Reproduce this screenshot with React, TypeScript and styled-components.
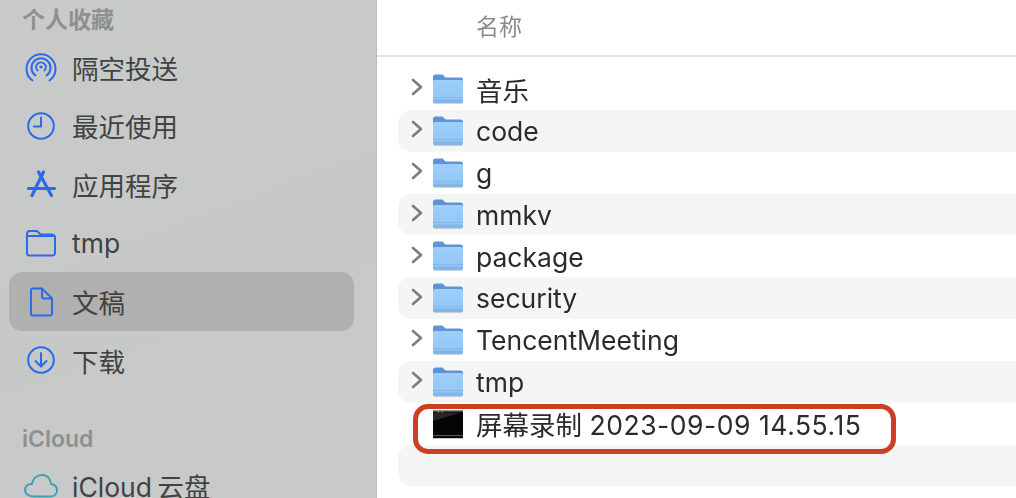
import React from "react";
import styled, { createGlobalStyle } from "styled-components";

const GlobalStyle = createGlobalStyle`
  html, body {
    margin: 0;
    padding: 0;
    height: 100%;
    overflow: hidden;
    background: #fff;
  }
  #root {
    height: 100%;
  }
`;

const FONT = `Inter, "Noto Sans CJK SC", sans-serif`;

const Window = styled.div`
  display: flex;
  width: 1016px;
  height: 498px;
  overflow: hidden;
  font-family: ${FONT};
  filter: blur(0.6px);
`;

const Sidebar = styled.aside`
  flex: none;
  box-sizing: border-box;
  width: 377px;
  height: 498px;
  overflow: hidden;
  padding: 0 22px 0 9px;
  background: linear-gradient(160deg, #c9caca, #c7c9c9 55%, #c9c9c9);
  border-right: 1px solid #bdbdbd;
`;

const SectionTitle = styled.div<{ $top: number }>`
  height: 38px;
  margin-top: ${(p) => p.$top}px;
  padding-left: 13px;
  font-size: 23px;
  font-weight: 600;
  line-height: 40px;
  color: #8e9090;
`;

const SideItem = styled.div<{ $active?: boolean }>`
  display: flex;
  align-items: center;
  gap: 14px;
  height: 58.6px;
  padding-left: 15px;
  border-radius: 13px;
  font-size: 26.5px;
  color: #414343;
  background: ${(p) => (p.$active ? "#afb0af" : "transparent")};

  svg {
    flex: none;
    width: 34px;
    height: 34px;
  }
`;

const NarrowSpace = styled.span`
  word-spacing: -2px;
`;

const Main = styled.main`
  flex: 1;
  min-width: 0;
`;

const Header = styled.div`
  box-sizing: border-box;
  height: 57px;
  padding: 9px 0 0 99px;
  border-bottom: 2px solid #e3e3e3;
  font-size: 23px;
  line-height: 36px;
  color: #8b8b8b;
`;

const List = styled.div`
  position: relative;
  padding: 11px 0 0 21px;
`;

const Row = styled.div<{ $striped: boolean }>`
  display: flex;
  align-items: center;
  height: 41.85px;
  padding-left: 13px;
  border-radius: 13px 0 0 13px;
  background: ${(p) => (p.$striped ? "#f4f5f5" : "transparent")};
  font-size: 26.5px;
  color: #2b2b2b;
  white-space: nowrap;
`;

const RowName = styled.span`
  margin-top: 0.5px;
`;

const DateText = styled.span`
  letter-spacing: 0.55px;
`;

const ChevronSlot = styled.span`
  flex: none;
  display: flex;
  width: 22px;
  margin-top: -3px;
`;

const ItemThumb = styled.span`
  flex: none;
  display: flex;
  width: 30px;
  margin-right: 13px;
`;

const Highlight = styled.div`
  position: absolute;
  left: 36px;
  top: 347px;
  width: 483px;
  height: 50px;
  box-sizing: border-box;
  border: 5px solid #cc3f22;
  border-radius: 15px;
`;

const BLUE = "#2b6bea";

const iconProps = {
  viewBox: "0 0 34 34",
  fill: "none",
  stroke: BLUE,
  strokeWidth: 2,
  strokeLinecap: "round" as const,
  strokeLinejoin: "round" as const,
};

const AirDropIcon = () => (
  <svg {...iconProps}>
    <path d="M8.500 30.500A14.500 14.500 0 1 1 25.500 30.500" />
    <path d="M11.500 25.500A9.500 9.500 0 1 1 22.500 25.500" />
    <path d="M13.500 20.500A4.800 4.800 0 1 1 20.500 20.500" />
    <circle cx="17" cy="17" r="1.600" fill={BLUE} stroke="none" />
  </svg>
);

const ClockIcon = () => (
  <svg {...iconProps}>
    <circle cx="17" cy="17" r="12.800" />
    <path d="M17 8.500V17.500H10" />
  </svg>
);

const AppsIcon = () => (
  <svg {...iconProps} strokeWidth={3.2}>
    <path d="M14.500 5L27.500 28.500" />
    <path d="M19.500 5L8 28.500" />
    <path d="M4.500 21.500H30.500" />
  </svg>
);

const FolderOutlineIcon = () => (
  <svg {...iconProps}>
    <path d="M3 10V8a3 3 0 0 1 3-3h7l3.500 3.500H28a3 3 0 0 1 3 3V27a2.500 2.500 0 0 1-2.500 2.500h-23A2.500 2.500 0 0 1 3 27V10H31" />
  </svg>
);

const DocIcon = () => (
  <svg {...iconProps}>
    <path d="M7 5.500A2 2 0 0 1 9 3.500H18L28 13.500V28.500A2 2 0 0 1 26 30.500H9A2 2 0 0 1 7 28.500Z" />
    <path d="M18 3.500V11.500A2 2 0 0 0 20 13.500H28" />
  </svg>
);

const DownloadIcon = () => (
  <svg {...iconProps}>
    <circle cx="17" cy="17" r="12.800" />
    <path d="M17 10V23.500" />
    <path d="M11.500 18L17 23.500L22.500 18" />
  </svg>
);

const CloudIcon = () => (
  <svg {...iconProps} stroke="#3f9db5">
    <path d="M10 27.500C5 27.500 1 25 1 21C1 17 4.500 14.500 8 15C9 9.500 13 6 18 6C23.500 6 26.500 10 27 15C30.500 15.500 33 18 33 21.500C33 25 30 27.500 26 27.500Z" />
  </svg>
);

const Chevron = () => (
  <svg width="12" height="18" viewBox="0 0 12 18" fill="none" stroke="#7d7d7d" strokeWidth="2.600" strokeLinecap="round" strokeLinejoin="round">
    <path d="M2 2L10 9L2 16" />
  </svg>
);

const FolderIcon = () => (
  <svg width="30" height="30" viewBox="0 0 30 30">
    <defs>
      <linearGradient id="folderBody" x1="0" y1="0" x2="0" y2="1">
        <stop offset="0" stopColor="#9dcffa" />
        <stop offset="1" stopColor="#90c5f6" />
      </linearGradient>
    </defs>
    <path d="M0 3a2.500 2.500 0 0 1 2.500-2.500h7l3 3h15a2.500 2.500 0 0 1 2.500 2.500v6H0Z" fill="#5f93d8" />
    <rect x="0" y="6" width="30" height="23.500" rx="2" fill="#8fa9c4" />
    <rect x="0" y="6" width="30" height="22.500" rx="2" fill="url(#folderBody)" />
    <rect x="0" y="23" width="30" height="1" fill="#86b7e8" />
    <rect x="0" y="25.500" width="30" height="3" rx="1.500" fill="#82b4e7" />
  </svg>
);

const RecordingThumb = () => (
  <svg width="30" height="30" viewBox="0 0 30 30">
    <rect x="0" y="1" width="30" height="28" fill="#050505" />
    <rect x="0" y="1" width="30" height="1.500" fill="#8b8b8b" />
    <rect x="4" y="2.500" width="2.500" height="1" fill="#8fb85e" />
    <rect x="8" y="2.500" width="2.500" height="1" fill="#8fb85e" />
    <path d="M0 12L28 3.500H0Z" fill="#262626" />
    <rect x="0" y="26" width="30" height="1" fill="#5a5a5a" />
    <rect x="0" y="29" width="30" height="1" fill="#c4c4c4" />
  </svg>
);

const sidebarFavorites = [
  { label: "隔空投送", icon: <AirDropIcon /> },
  { label: "最近使用", icon: <ClockIcon /> },
  { label: "应用程序", icon: <AppsIcon /> },
  { label: "tmp", icon: <FolderOutlineIcon /> },
  { label: "文稿", icon: <DocIcon />, active: true },
  { label: "下载", icon: <DownloadIcon /> },
];

const folders = ["音乐", "code", "g", "mmkv", "package", "security", "TencentMeeting", "tmp"];

const App = () => {
  return (
    <>
      <GlobalStyle />
      <Window>
        <Sidebar>
          <SectionTitle $top={0}>个人收藏</SectionTitle>
          {sidebarFavorites.map((item) => (
            <SideItem key={item.label} $active={item.active}>
              {item.icon}
              <span>{item.label}</span>
            </SideItem>
          ))}
          <SectionTitle $top={29}>iCloud</SectionTitle>
          <SideItem>
            <CloudIcon />
            <NarrowSpace>iCloud 云盘</NarrowSpace>
          </SideItem>
        </Sidebar>
        <Main>
          <Header>名称</Header>
          <List>
            {folders.map((name, i) => (
              <Row key={name} $striped={i % 2 === 1}>
                <ChevronSlot>
                  <Chevron />
                </ChevronSlot>
                <ItemThumb>
                  <FolderIcon />
                </ItemThumb>
                <RowName>{name}</RowName>
              </Row>
            ))}
            <Row $striped={false}>
              <ChevronSlot />
              <ItemThumb>
                <RecordingThumb />
              </ItemThumb>
              <RowName>
                屏幕录制 <DateText>2023-09-09 14.55.15</DateText>
              </RowName>
            </Row>
            <Row $striped={true} />
            <Highlight />
          </List>
        </Main>
      </Window>
    </>
  );
};

export default App;
